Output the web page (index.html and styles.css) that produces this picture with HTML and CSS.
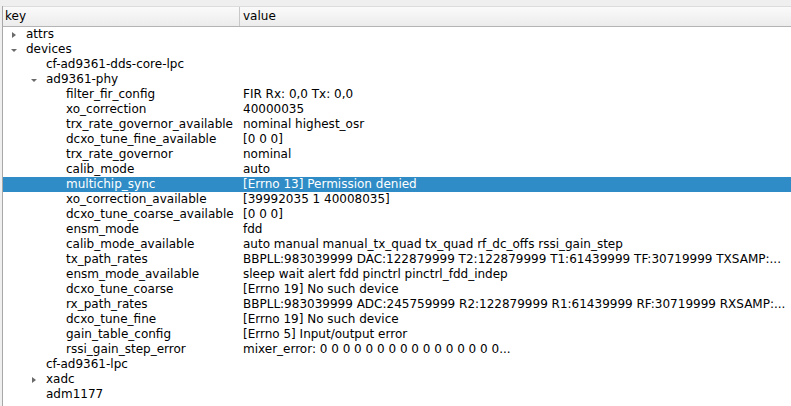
FILE: index.html
```html
<!DOCTYPE html>
<html>
<head>
<meta charset="utf-8">
<link rel="stylesheet" href="styles.css">
</head>
<body>
<div class="frame">
  <div class="header">
    <div class="hcell hkey">key</div>
    <div class="hcell hval">value</div>
  </div>
  <div class="tree">
    <div class="row"><div class="key d0"><svg class="arr" viewBox="0 0 8 8"><path d="M2 1 L6 4 L2 7 Z"/></svg>attrs</div><div class="val"></div></div>
    <div class="row"><div class="key d0"><svg class="arr" viewBox="0 0 8 8"><path d="M1 3 L7 3 L4 6 Z"/></svg>devices</div><div class="val"></div></div>
    <div class="row"><div class="key d1">cf-ad9361-dds-core-lpc</div><div class="val"></div></div>
    <div class="row"><div class="key d1"><svg class="arr" viewBox="0 0 8 8"><path d="M1 3 L7 3 L4 6 Z"/></svg>ad9361-phy</div><div class="val"></div></div>
    <div class="row"><div class="key d2">filter_fir_config</div><div class="val">FIR Rx: 0,0 Tx: 0,0</div></div>
    <div class="row"><div class="key d2">xo_correction</div><div class="val">40000035</div></div>
    <div class="row"><div class="key d2">trx_rate_governor_available</div><div class="val">nominal highest_osr</div></div>
    <div class="row"><div class="key d2">dcxo_tune_fine_available</div><div class="val">[0 0 0]</div></div>
    <div class="row"><div class="key d2">trx_rate_governor</div><div class="val">nominal</div></div>
    <div class="row"><div class="key d2">calib_mode</div><div class="val">auto</div></div>
    <div class="row selected"><div class="key d2">multichip_sync</div><div class="val">[Errno 13] Permission denied</div></div>
    <div class="row"><div class="key d2">xo_correction_available</div><div class="val">[39992035 1 40008035]</div></div>
    <div class="row"><div class="key d2">dcxo_tune_coarse_available</div><div class="val">[0 0 0]</div></div>
    <div class="row"><div class="key d2">ensm_mode</div><div class="val">fdd</div></div>
    <div class="row"><div class="key d2">calib_mode_available</div><div class="val">auto manual manual_tx_quad tx_quad rf_dc_offs rssi_gain_step</div></div>
    <div class="row"><div class="key d2">tx_path_rates</div><div class="val">BBPLL:983039999 DAC:122879999 T2:122879999 T1:61439999 TF:30719999 TXSAMP:...</div></div>
    <div class="row"><div class="key d2">ensm_mode_available</div><div class="val">sleep wait alert fdd pinctrl pinctrl_fdd_indep</div></div>
    <div class="row"><div class="key d2">dcxo_tune_coarse</div><div class="val">[Errno 19] No such device</div></div>
    <div class="row"><div class="key d2">rx_path_rates</div><div class="val">BBPLL:983039999 ADC:245759999 R2:122879999 R1:61439999 RF:30719999 RXSAMP:...</div></div>
    <div class="row"><div class="key d2">dcxo_tune_fine</div><div class="val">[Errno 19] No such device</div></div>
    <div class="row"><div class="key d2">gain_table_config</div><div class="val">[Errno 5] Input/output error</div></div>
    <div class="row"><div class="key d2">rssi_gain_step_error</div><div class="val">mixer_error: 0 0 0 0 0 0 0 0 0 0 0 0 0 0 0 0...</div></div>
    <div class="row"><div class="key d1">cf-ad9361-lpc</div><div class="val"></div></div>
    <div class="row"><div class="key d1"><svg class="arr" viewBox="0 0 8 8"><path d="M2 1 L6 4 L2 7 Z"/></svg>xadc</div><div class="val"></div></div>
    <div class="row"><div class="key d1">adm1177</div><div class="val"></div></div>
  </div>
</div>
</body>
</html>
```

FILE: styles.css
```css
html, body {
  margin: 0;
  padding: 0;
  background: #efefef;
}
body {
  font-family: "DejaVu Sans", sans-serif;
  font-size: 12px;
  color: #000;
  overflow: hidden;
}
.frame {
  margin-top: 6px;
  margin-left: 2px;
  border-left: 1px solid #a8a8a8;
  background: #fff;
  height: 400px;
}
.header {
  display: grid;
  grid-template-columns: 237px 1fr;
  height: 19px;
  background: linear-gradient(#fafafa, #ececec);
  border-top: 1px solid #dcdcdc;
  border-bottom: 1px solid #b4b4b4;
}
.hcell {
  line-height: 19px;
  white-space: nowrap;
}
.hkey {
  padding-left: 2px;
  border-right: 1px solid #c8c8c8;
}
.hval {
  padding-left: 3px;
}
.row {
  display: grid;
  grid-template-columns: 237px 1fr;
  height: 15px;
  line-height: 15px;
  white-space: nowrap;
}
.row.selected {
  background: #308cc6;
  color: #fff;
}
.key {
  position: relative;
  overflow: hidden;
}
.val {
  padding-left: 3px;
  padding-right: 8px;
  overflow: hidden;
}
.d0 { padding-left: 23px; }
.d1 { padding-left: 43px; }
.d2 { padding-left: 63px; }
.arr {
  position: absolute;
  width: 8px;
  height: 8px;
  top: 4px;
  fill: #6a6a6a;
}
.d0 .arr { left: 7px; }
.d1 .arr { left: 27px; }
```
